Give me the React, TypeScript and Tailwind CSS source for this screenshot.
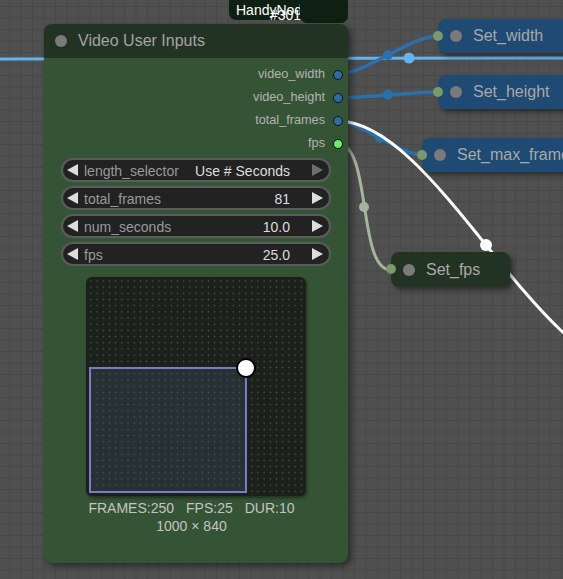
const font = { fontFamily: '"Liberation Sans", Arial, sans-serif' };

const outputs = [
  { name: "video_width", color: "bg-[#2d6ca3]" },
  { name: "video_height", color: "bg-[#2d6ca3]" },
  { name: "total_frames", color: "bg-[#2d6ca3]" },
  { name: "fps", color: "bg-[#66f266]" },
];

const widgets = [
  { label: "length_selector", value: "Use # Seconds", combo: true },
  { label: "total_frames", value: "81" },
  { label: "num_seconds", value: "10.0" },
  { label: "fps", value: "25.0" },
];

function Arrow({ dir, dim }: { dir: "left" | "right"; dim?: boolean }) {
  return (
    <svg width="11" height="12" viewBox="0 0 11 12" className="shrink-0">
      <polygon
        points={dir === "left" ? "11,0 11,12 0,6" : "0,0 0,12 11,6"}
        fill={dim ? "#6f6f6f" : "#dddddd"}
      />
    </svg>
  );
}

function SetNode({
  title,
  className,
}: {
  title: string;
  className: string;
}) {
  return (
    <div
      className={`absolute h-[34px] rounded-lg flex items-center shadow-[3px_3px_5px_rgba(0,0,0,0.45)] ${className}`}
    >
      <div className="absolute left-[-5px] top-[12px] w-[10px] h-[10px] rounded-full bg-[#789a6c]" />
      <div className="ml-[12px] w-[12px] h-[12px] rounded-full bg-[#7a7a7a]" />
      <span className="ml-[11px] text-[16px] text-[#a9a9a9] whitespace-nowrap">{title}</span>
    </div>
  );
}

export default function App() {
  return (
    <div
      className="relative w-[563px] h-[579px] overflow-hidden bg-[#505050] bg-[linear-gradient(#484848_1px,transparent_1px),linear-gradient(90deg,#484848_1px,transparent_1px)] [background-size:11.5px_11.5px] [background-position:9px_6px]"
      style={font}
    >
      {/* links */}
      <svg className="absolute inset-0" width="563" height="579">
        <line x1="0" y1="59" x2="563" y2="58" stroke="#62b3ef" strokeWidth="3" />
        <circle cx="409" cy="58" r="5.5" fill="#62b3ef" />

        <path d="M338 74 C365 74 411 36 438 36" stroke="#2b70ae" strokeWidth="3.5" fill="none" />
        <circle cx="388" cy="55" r="5" fill="#2b70ae" />

        <path d="M338 98 C363 98 413 92 438 92" stroke="#2b70ae" strokeWidth="3.5" fill="none" />
        <circle cx="388" cy="94.5" r="5" fill="#2b70ae" />

        <path d="M338 121 C360 121 400 155 422 155" stroke="#2b70ae" strokeWidth="3.5" fill="none" />
        <circle cx="380" cy="138" r="5" fill="#2b70ae" />

        <path d="M338 121 C434 121 538 369 634 369" stroke="#ffffff" strokeWidth="3" fill="none" />
        <circle cx="486" cy="245" r="6" fill="#ffffff" />

        <path d="M338 144 C372 144 357 270 391 270" stroke="#a4b59c" strokeWidth="3" fill="none" />
        <circle cx="364" cy="207" r="5" fill="#a4b59c" />
      </svg>

      {/* group title tab */}
      <div className="absolute left-[229px] top-[-6px] w-[119px] h-[26px] rounded-[7px] bg-[#0f1f11]" />
      <div className="absolute left-[236px] top-[1px] w-[64px] overflow-hidden text-[14px] text-white whitespace-nowrap leading-[18px]">
        HandyNode
      </div>
      <div className="absolute left-[300px] top-[-6px] w-[48px] h-[29px] rounded-[7px] bg-[#0f1f11]" />
      <div className="absolute left-[270px] top-[6px] text-[14px] text-white leading-[18px]">#301</div>

      {/* main node */}
      <div className="absolute left-[44px] top-[24px] w-[304px] h-[539px] rounded-lg bg-[#355335] shadow-[3px_3px_6px_rgba(0,0,0,0.5)] flex flex-col">
        <div className="h-[34px] rounded-t-lg bg-[#233323] flex items-center">
          <div className="ml-[11px] w-[12px] h-[12px] rounded-full bg-[#7a7a7a]" />
          <span className="ml-[11px] text-[16px] text-[#a3a3a3]">Video User Inputs</span>
        </div>

        <div className="pt-[5px] flex flex-col items-end pr-[5px]">
          {outputs.map((o) => (
            <div key={o.name} className="h-[23px] flex items-center">
              <span className="text-[12.7px] text-[#b3b3b3]">{o.name}</span>
              <div className={`ml-[8px] w-[10px] h-[10px] rounded-full border border-[#111] ${o.color}`} />
            </div>
          ))}
        </div>

        <div className="mt-[3px] ml-[17px] w-[270px] flex flex-col gap-[4px]">
          {widgets.map((w) => (
            <div
              key={w.label}
              className="h-[24px] rounded-full bg-[#222222] border-2 border-[#5c5c5c] flex items-center pl-[4px] pr-[6px]"
            >
              <Arrow dir="left" />
              <span className="ml-[6px] pt-[3px] text-[14px] text-[#9a9a9a] whitespace-nowrap">{w.label}</span>
              <span className="flex-1 pt-[3px] text-right text-[14px] text-[#dddddd] whitespace-nowrap">{w.value}</span>
              <span className="ml-[22px]">
                <Arrow dir="right" dim={w.combo} />
              </span>
            </div>
          ))}
        </div>

        <div className="relative mt-[11px] ml-[42px] w-[220px] h-[219px] rounded-md bg-[#1b201b] bg-[radial-gradient(circle,#585858_0.6px,transparent_1px)] [background-size:6.2px_6.2px] [background-position:8px_7px] shadow-[1px_2px_3px_rgba(0,0,0,0.4)]">
          <div className="absolute left-[3px] top-[90px] w-[158px] h-[126px] border-2 border-[#7b7bc9] bg-[rgba(70,85,110,0.3)]" />
          <div className="absolute left-[150px] top-[81px] w-[20px] h-[20px] rounded-full bg-white border-2 border-black" />
        </div>

        <div className="mt-[3px] pr-[9px] flex flex-col items-center text-[14px] text-[#c4c4c4] leading-[18px]">
          <div className="flex gap-[12px]">
            <span>FRAMES:250</span>
            <span>FPS:25</span>
            <span>DUR:10</span>
          </div>
          <div>1000 × 840</div>
        </div>
      </div>

      <SetNode title="Set_width" className="left-[438px] top-[19px] w-[160px] bg-[#1e4a73]" />
      <SetNode title="Set_height" className="left-[438px] top-[75px] w-[160px] bg-[#1e4a73]" />
      <SetNode title="Set_max_frames" className="left-[422px] top-[138px] w-[180px] bg-[#1e4a73]" />
      <SetNode title="Set_fps" className="left-[391px] top-[252px] w-[119px] h-[35px] bg-[#233323]" />
    </div>
  );
}
